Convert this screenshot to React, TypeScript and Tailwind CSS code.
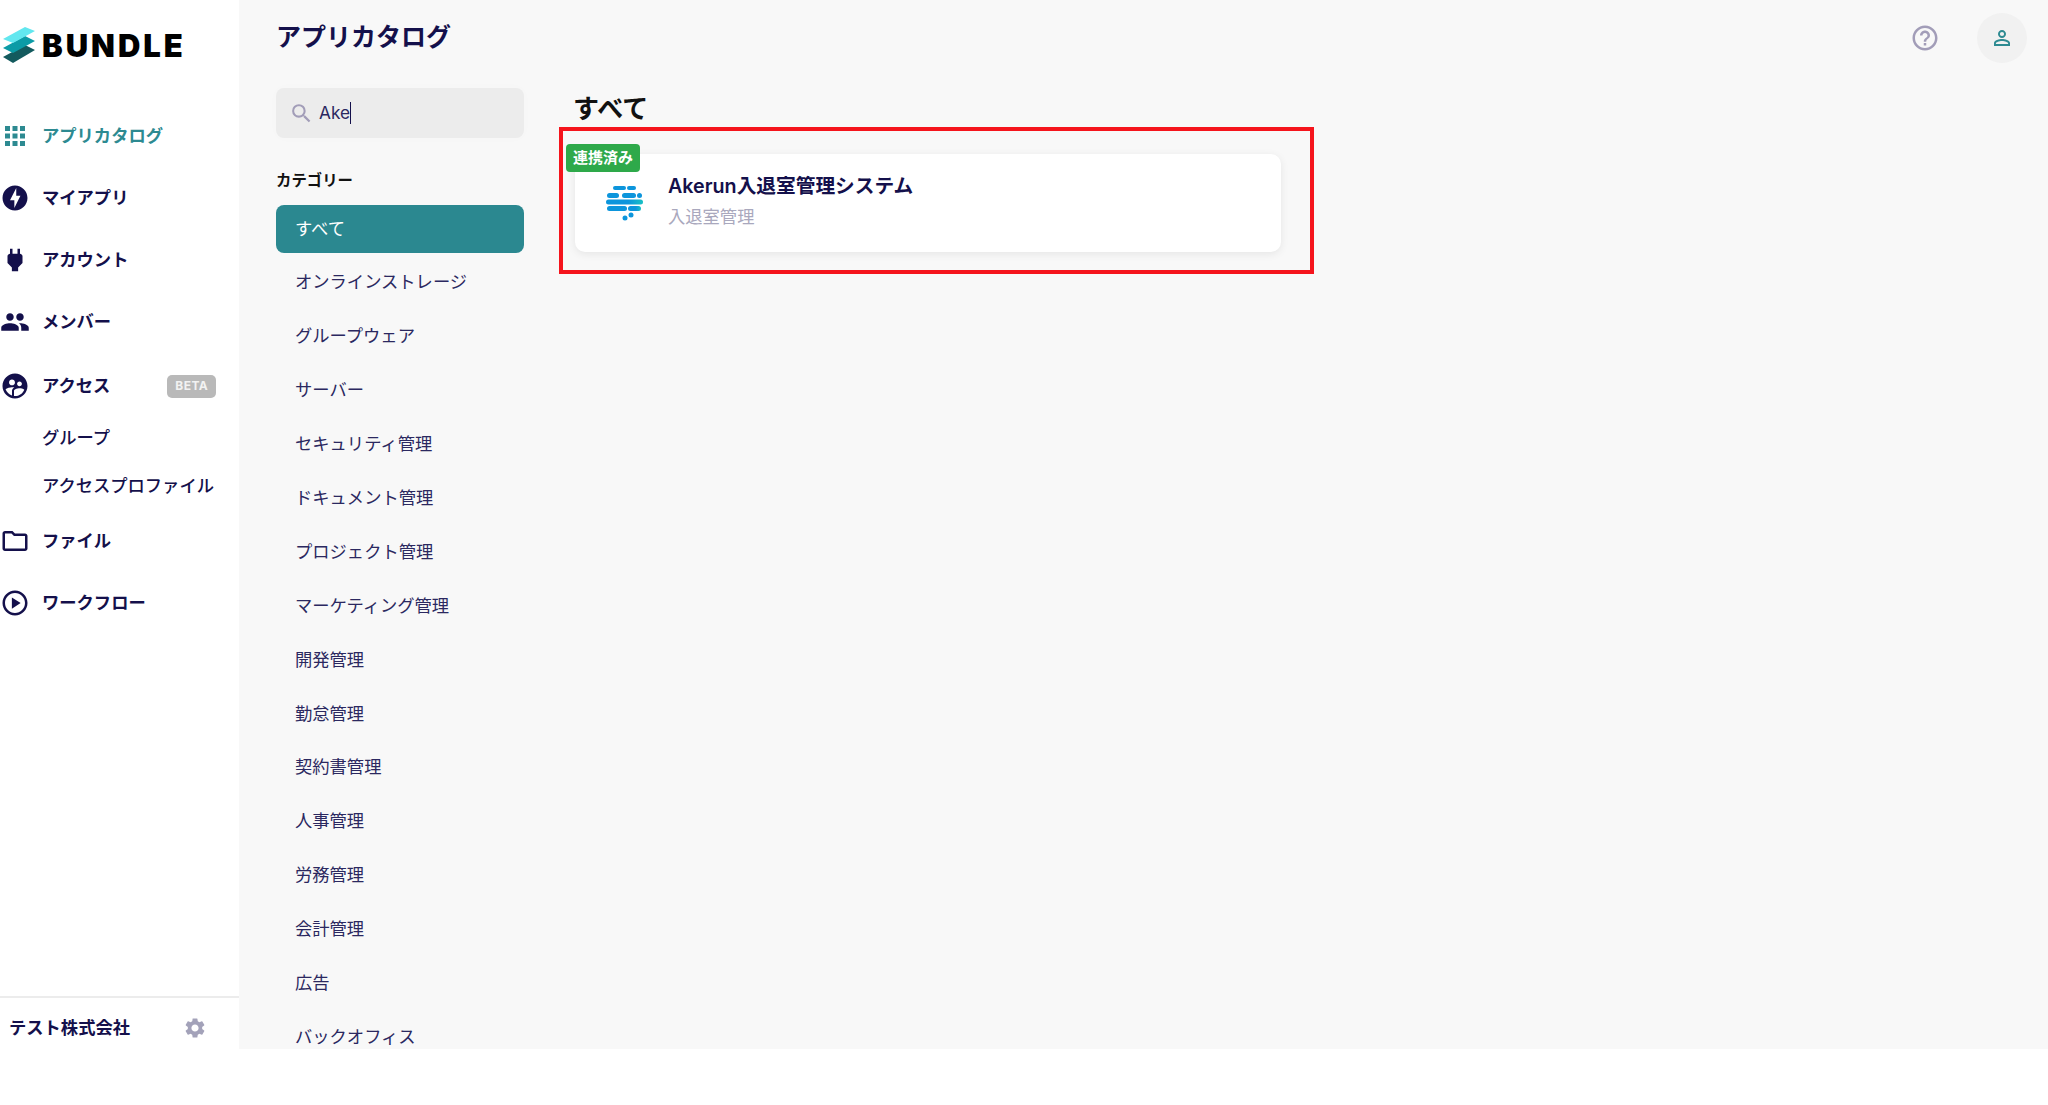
import React from "react";
import {
  MdApps,
  MdOfflineBolt,
  MdPower,
  MdPeople,
  MdSupervisedUserCircle,
  MdOutlineFolder,
  MdOutlinePlayCircle,
  MdSettings,
  MdSearch,
  MdHelpOutline,
  MdPersonOutline,
} from "react-icons/md";

const cats = [
  "オンラインストレージ",
  "グループウェア",
  "サーバー",
  "セキュリティ管理",
  "ドキュメント管理",
  "プロジェクト管理",
  "マーケティング管理",
  "開発管理",
  "勤怠管理",
  "契約書管理",
  "人事管理",
  "労務管理",
  "会計管理",
  "広告",
  "バックオフィス",
];

function NavRow({ icon, label, active }: { icon: React.ReactNode; label: string; active?: boolean }) {
  return (
    <div className={`flex h-[62px] items-center ${active ? "text-[#2d8a91]" : "text-[#14104b]"}`}>
      <span className="flex w-[30px] shrink-0 justify-center">{icon}</span>
      <span className="ml-[12px] text-[17.3px] font-bold">{label}</span>
    </div>
  );
}

function Logo() {
  return (
    <div className="flex h-[105px] items-start pt-[27px]">
      <svg width="32" height="36" viewBox="0 0 32 36" className="ml-[3px] shrink-0">
        <path d="M0 30 L22 18 L32 23 L10 36 Z" fill="#135a5e" />
        <path d="M0 21 L22 9 L32 14 L10 26 Z" fill="#0c9ba6" />
        <path d="M0 12 L22 0 L32 4 L10 16 Z" fill="#62e7ef" />
      </svg>
      <span className="ml-[7px] mt-[0px] text-[31px] leading-[38px] font-black tracking-[3px] text-black">BUNDLE</span>
    </div>
  );
}

function AkerunLogo() {
  const bars: [number, number, number, number][] = [
    [7, 0, 13, 4],
    [21, 0, 9, 4],
    [1, 7, 12, 5],
    [16, 7, 14, 5],
    [31, 7, 5, 5],
    [1, 20, 20, 5],
  ];
  return (
    <svg width="37" height="35" viewBox="0 0 37 35" className="shrink-0">
      <defs>
        <linearGradient id="ak" x1="0" x2="1" y1="0" y2="0">
          <stop offset="0" stopColor="#0c95dc" />
          <stop offset="0.6" stopColor="#0c95dc" />
          <stop offset="1" stopColor="#19c1c4" />
        </linearGradient>
      </defs>
      {bars.map(([x, y, w, h], i) => (
        <rect key={i} x={x} y={y} width={w} height={h} rx={h / 2} fill="#0c95dc" />
      ))}
      <rect x="0" y="13.5" width="37" height="5" rx="2.5" fill="url(#ak)" />
      <rect x="22" y="20" width="13" height="5" rx="2.5" fill="url(#ak)" />
      <circle cx="25" cy="29" r="2.5" fill="#0c95dc" />
      <circle cx="19" cy="32" r="2.5" fill="#0c95dc" />
    </svg>
  );
}

export default function App() {
  return (
    <div className="flex h-[1105px] w-[2048px] overflow-hidden bg-white font-['Inter','Noto_Sans_CJK_JP',sans-serif]">
      <aside className="flex h-full w-[239px] shrink-0 flex-col bg-white">
        <Logo />
        <NavRow active label="アプリカタログ" icon={<MdApps size={30} />} />
        <NavRow label="マイアプリ" icon={<MdOfflineBolt size={30} />} />
        <NavRow label="アカウント" icon={<MdPower size={30} />} />
        <NavRow label="メンバー" icon={<MdPeople size={30} />} />
        <div className="mt-[5px] flex h-[56px] items-center text-[#14104b]">
          <span className="flex w-[30px] shrink-0 justify-center">
            <MdSupervisedUserCircle size={30} />
          </span>
          <span className="ml-[12px] text-[17.3px] font-bold">アクセス</span>
          <span className="ml-[57px] flex h-[23px] w-[49px] items-center justify-center rounded-[5px] bg-[#b9b9b9] text-[12px] font-bold tracking-[0.5px] text-[#f2f2f2]">
            BETA
          </span>
        </div>
        <div className="flex h-[48px] items-center pl-[42px] text-[17.3px] font-medium text-[#14104b]">グループ</div>
        <div className="flex h-[48px] items-center pl-[42px] text-[17.3px] font-medium whitespace-nowrap text-[#14104b]">アクセスプロファイル</div>
        <NavRow label="ファイル" icon={<MdOutlineFolder size={30} />} />
        <NavRow label="ワークフロー" icon={<MdOutlinePlayCircle size={30} />} />
        <div className="flex-1" />
        <div className="mb-[47px] flex h-[62px] items-center border-t-2 border-[#ececec] pr-[32px] pl-[9px] text-[#14104b]">
          <span className="flex-1 text-[17.3px] font-bold">テスト株式会社</span>
          <MdSettings size={24} className="text-[#a3a2b9]" />
        </div>
      </aside>

      <main className="h-[1049px] flex-1 overflow-hidden bg-[#f8f8f8] pr-[21px] pl-[37px]">
        <header className="mb-[12px] flex h-[76px] items-center">
          <h1 className="flex-1 text-[25px] font-bold text-[#14104b]">アプリカタログ</h1>
          <MdHelpOutline size={30} className="mr-[37px] text-[#a29db8]" />
          <div className="flex h-[50px] w-[50px] items-center justify-center rounded-full bg-[#f1f1f1]">
            <MdPersonOutline size={24} className="text-[#2d8a91]" />
          </div>
        </header>

        <div className="flex gap-[51px]">
          <div className="w-[248px] shrink-0">
            <div className="flex h-[50px] items-center rounded-[8px] bg-[#ececec] pl-[13px] shadow-[0_0_12px_rgba(0,0,0,0.015)]">
              <MdSearch size={25} className="text-[#a29db8]" />
              <span className="ml-[5px] text-[17.3px] leading-[24px] text-[#2b2860]">Ake</span>
              <span className="h-[22px] w-px bg-[#14104b]" />
            </div>
            <div className="mt-[31px] mb-[12px] flex h-[24px] items-center text-[15.4px] font-bold text-[#111111]">カテゴリー</div>
            <div className="flex h-[48px] items-center rounded-[8px] bg-[#2b8890] pb-[1px] pl-[19px] text-[17.3px] text-white">すべて</div>
            {cats.map((c) => (
              <div key={c} className="mt-[5.9px] flex h-[48px] items-center pb-[1px] pl-[19px] text-[17.3px] text-[#2b2860]">
                {c}
              </div>
            ))}
          </div>

          <section className="relative w-[706px]">
            <h2 className="mt-[1px] mb-[27px] ml-[-2px] flex h-[38px] items-center text-[26px] font-bold text-[#111111]">すべて</h2>
            <div className="relative flex h-[98px] items-center rounded-[10px] bg-white pl-[31px] shadow-[0_2px_8px_rgba(0,0,0,0.08)]">
              <span className="absolute top-[-10px] left-[-9px] flex h-[28px] w-[74px] items-center justify-center rounded-[4px] bg-[#2ea94a] text-[15px] font-bold whitespace-nowrap text-white">
                連携済み
              </span>
              <AkerunLogo />
              <div className="mt-[-5px] ml-[25px] flex flex-col">
                <span className="mt-[-1px] text-[19.7px] leading-[30px] font-semibold text-[#14104b]">Akerun入退室管理システム</span>
                <span className="mt-[3px] text-[17.3px] leading-[26px] text-[#a9a8bd]">入退室管理</span>
              </div>
            </div>
            <div className="pointer-events-none absolute top-[39px] left-[-16px] h-[147px] w-[755px] border-4 border-[#f5141c]" />
          </section>
        </div>
      </main>
    </div>
  );
}
